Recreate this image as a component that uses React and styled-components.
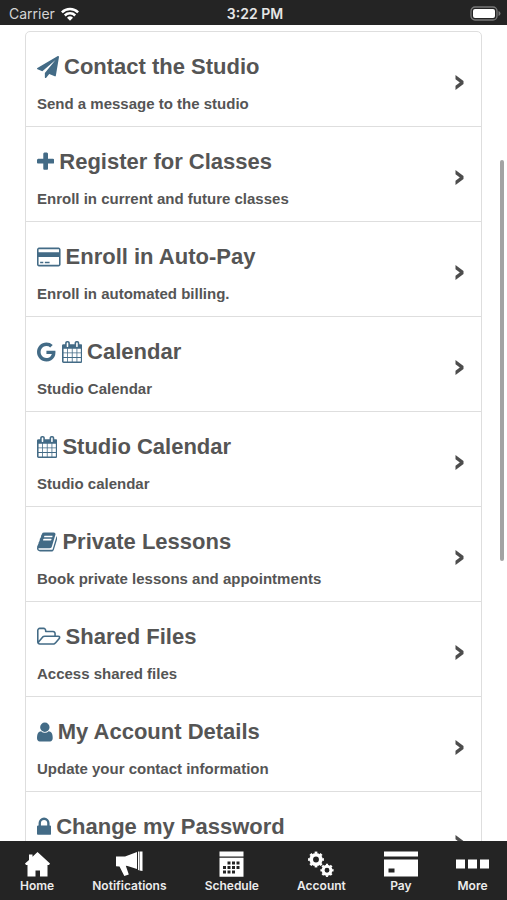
import React from 'react';
import styled, { createGlobalStyle } from 'styled-components';

const GlobalStyle = createGlobalStyle`
  * {
    box-sizing: border-box;
  }

  body {
    margin: 0;
    background-color: #fff;
    font-family: 'Liberation Sans', Arial, sans-serif;
  }
`;

const Screen = styled.div`
  display: flex;
  flex-direction: column;
  height: 100vh;
`;

const StatusBar = styled.header`
  display: grid;
  grid-template-columns: 1fr auto 1fr;
  align-items: center;
  flex: none;
  height: 25px;
  padding: 2px 6px 0 9px;
  background-color: #242424;
  color: #d4d4d4;
  font-family: Inter, sans-serif;
  font-size: 14px;
  line-height: 16px;

  svg {
    display: block;
  }
`;

const Carrier = styled.div`
  display: flex;
  align-items: center;
  gap: 6px;
`;

const Clock = styled.time`
  color: #e6e6e6;
  font-weight: 600;
`;

const Battery = styled.div`
  justify-self: end;
`;

const Content = styled.main`
  position: relative;
  flex: 1;
  min-height: 0;
  overflow: hidden;
  padding: 6px 25px 0;
`;

const ScrollThumb = styled.div`
  position: absolute;
  top: 16.5%;
  right: 3px;
  width: 4px;
  height: 49.2%;
  border-radius: 2px;
  background-color: #a3a3a3;
`;

const Menu = styled.ul`
  margin: 0;
  padding: 0;
  list-style: none;
  border: 1px solid #dedede;
  border-radius: 5px;
`;

const MenuItem = styled.li`
  & + & {
    border-top: 1px solid #dedede;
  }
`;

const MenuLink = styled.a`
  display: flex;
  align-items: center;
  justify-content: space-between;
  padding: 19px 17px 12px 11px;
  color: #555;
  text-decoration: none;
`;

const MenuTitle = styled.h2`
  display: flex;
  align-items: center;
  gap: 5px;
  margin: 0 0 11px;
  font-size: 22px;
  font-weight: bold;
  line-height: 32px;
`;

const MenuText = styled.p`
  min-height: 20px;
  margin: 0;
  font-size: 15px;
  font-weight: bold;
  line-height: 20px;
`;

const MenuIcon = styled.svg`
  height: 22px;
  flex: none;
  fill: #436b86;
`;

const Chevron = styled.svg`
  flex: none;
  fill: #4d4d4d;
`;

const TabBar = styled.nav`
  display: flex;
  justify-content: space-between;
  flex: none;
  height: 59px;
  padding: 10px 18px 0 20px;
  background-color: #242424;
`;

const Tab = styled.a`
  display: flex;
  flex-direction: column;
  align-items: center;
  gap: 1px;
  color: #ececec;
  font-family: Inter, sans-serif;
  font-size: 12px;
  font-weight: 600;
  line-height: 16px;
  text-decoration: none;

  svg {
    display: block;
    height: 26px;
    fill: #fff;
  }
`;

// each icon: view box and path
const icons = {
  plane: {
    box: '0 0 1792 1792',
    path: 'M1764 11q33 24 27 64l-256 1536q-5 29-32 45-14 8-31 8-11 0-24-5l-453-185-242 295q-18 23-49 23-13 0-22-4-19-7-30.5-23.5t-11.5-36.5v-349l864-1059-1069 925-395-162q-37-14-40-55-2-40 32-59l1664-960q15-9 32-9 20 0 36 11z',
  },
  plus: {
    box: '192 0 1408 1792',
    path: 'M1600 736v192q0 40-28 68t-68 28h-416v416q0 40-28 68t-68 28h-192q-40 0-68-28t-28-68v-416h-416q-40 0-68-28t-28-68v-192q0-40 28-68t68-28h416v-416q0-40 28-68t68-28h192q40 0 68 28t28 68v416h416q40 0 68 28t28 68z',
  },
  card: {
    box: '0 0 1920 1792',
    path: 'M1760 128q66 0 113 47t47 113v1216q0 66-47 113t-113 47h-1600q-66 0-113-47t-47-113v-1216q0-66 47-113t113-47h1600zM160 256q-13 0-22.500 9.500t-9.500 22.500v224h1664v-224q0-13-9.500-22.500t-22.500-9.500h-1600zM1760 1536q13 0 22.500-9.500t9.500-22.500v-608h-1664v608q0 13 9.500 22.500t22.500 9.500h1600zM256 1408v-128h256v128h-256zM640 1408v-128h384v128h-384z',
  },
  google: {
    box: '128 0 1600 1792',
    path: 'M896 786h725q12 67 12 128 0 217-91 387.5t-259.5 266.5-386.5 96q-157 0-299-60.5t-245-163.5-163.500-245-60.500-299 60.500-299 163.500-245 245-163.500 299-60.500q300 0 515 201l-209 201q-123-119-306-119-129 0-238.500 65t-173.500 176.500-64 243.500 64 243.500 173.500 176.500 238.500 65q87 0 160-24t120-60 82-82 51.500-87 22.500-78h-436v-264z',
  },
  calendar: {
    box: '64 0 1664 1792',
    path: 'M192 1664h288v-288h-288v288zm352 0h320v-288h-320v288zm-352-352h288v-320h-288v320zm352 0h320v-320h-320v320zm-352-384h288v-288h-288v288zm736 736h320v-288h-320v288zm-384-736h320v-288h-320v288zm768 736h288v-288h-288v288zm-384-352h320v-320h-320v320zm-352-864v-288q0-13-9.500-22.500t-22.500-9.500h-64q-13 0-22.500 9.500t-9.500 22.500v288q0 13 9.500 22.500t22.500 9.500h64q13 0 22.500-9.500t9.500-22.500zm736 864h288v-320h-288v320zm-384-384h320v-288h-320v288zm384 0h288v-288h-288v288zm32-480v-288q0-13-9.500-22.500t-22.500-9.500h-64q-13 0-22.500 9.500t-9.500 22.500v288q0 13 9.500 22.500t22.500 9.500h64q13 0 22.500-9.500t9.500-22.500zm384-64v1280q0 52-38 90t-90 38h-1408q-52 0-90-38t-38-90v-1280q0-52 38-90t90-38h128v-96q0-66 47-113t113-47h64q66 0 113 47t47 113v96h384v-96q0-66 47-113t113-47h64q66 0 113 47t47 113v96h128q52 0 90 38t38 90z',
  },
  book: {
    box: '64 0 1664 1792',
    path: 'M1703 478q40 57 18 129l-275 906q-19 64-76.5 107.5t-122.500 43.500h-923q-77 0-148.500-53.500t-99.500-131.500q-24-67-2-127 0-4 3-27t4-37q1-8-3-21.500t-3-19.500q2-11 8-21t16.500-23.500 16.500-23.500q23-38 45-91.500t30-91.500q3-10 .5-30t-.5-28q3-11 17-28t17-23q21-36 42-92t25-90q1-9-2.500-32t.5-28q4-13 22-30.500t22-22.500q19-26 42.500-84.500t27.500-96.500q1-8-3-25.500t-2-26.500q2-8 9-18t18-23 17-21q8-12 16.500-30.500t15-35 16-36 19.500-32 26.500-23.500 36-11.500 47.500 5.500l-1 3q38-9 51-9h761q74 0 114 56t18 130l-274 906q-36 119-71.500 153.500t-128.500 34.500h-869q-27 0-38 15-11 16-1 43 24 70 144 70h923q29 0 56-15.500t35-41.500l300-987q7-22 5-57 38 15 59 43zm-1064 2q-4 13 2 22.500t20 9.500h608q13 0 25.500-9.500t16.500-22.500l21-64q4-13-2-22.500t-20-9.500h-608q-13 0-25.500 9.500t-16.500 22.500zm-83 256q-4 13 2 22.500t20 9.500h608q13 0 25.500-9.500t16.500-22.500l21-64q4-13-2-22.500t-20-9.500h-608q-13 0-25.500 9.500t-16.500 22.500z',
  },
  folder: {
    box: '0 0 1920 1792',
    path: 'M1781 931q0-35-53-35h-1088q-40 0-85.500 21.500t-71.500 52.500l-294 363q-18 24-18 40 0 35 53 35h1088q40 0 86-22t71-53l294-363q18-22 18-39zm-1141-163h768v-160q0-40-28-68t-68-28h-576q-40 0-68-28t-28-68v-64q0-40-28-68t-68-28h-320q-40 0-68 28t-28 68v853l256-315q44-53 116-87.500t140-34.500zm1269 163q0 62-46 120l-295 363q-43 53-116 87.500t-140 34.500h-1088q-92 0-158-66t-66-158v-960q0-92 66-158t158-66h320q92 0 158 66t66 158v32h544q92 0 158 66t66 158v160h192q54 0 99 24.500t67 70.500q15 32 15 68z',
  },
  user: {
    box: '256 0 1280 1792',
    path: 'M1536 1399q0 109-62.500 187t-150.500 78h-854q-88 0-150.500-78t-62.500-187q0-85 8.500-160.500t31.500-152 58.500-131 94-89 134.500-34.500q131 128 313 128t313-128q76 0 134.500 34.500t94 89 58.500 131 31.500 152 8.500 160.500zm-256-887q0 159-112.500 271.500t-271.500 112.500-271.500-112.500-112.500-271.500 112.500-271.500 271.500-112.500 271.500 112.500 112.500 271.500z',
  },
  lock: {
    box: '320 0 1152 1792',
    path: 'M640 768h512v-192q0-106-75-181t-181-75-181 75-75 181v192zm832 96v576q0 40-28 68t-68 28h-960q-40 0-68-28t-28-68v-576q0-40 28-68t68-28h32v-192q0-184 132-316t316-132 316 132 132 316v192h32q40 0 68 28t28 68z',
  },
};

const menuItems = [
  { icons: ['plane'], title: 'Contact the Studio', text: 'Send a message to the studio' },
  { icons: ['plus'], title: 'Register for Classes', text: 'Enroll in current and future classes' },
  { icons: ['card'], title: 'Enroll in Auto-Pay', text: 'Enroll in automated billing.' },
  { icons: ['google', 'calendar'], title: 'Calendar', text: 'Studio Calendar' },
  { icons: ['calendar'], title: 'Studio Calendar', text: 'Studio calendar' },
  { icons: ['book'], title: 'Private Lessons', text: 'Book private lessons and appointments' },
  { icons: ['folder'], title: 'Shared Files', text: 'Access shared files' },
  { icons: ['user'], title: 'My Account Details', text: 'Update your contact information' },
  { icons: ['lock'], title: 'Change my Password' },
];

function HomeIcon() {
  return (
    <svg width="25" viewBox="0 0 25 26" aria-hidden="true">
      <path d="M12.500 1 25 12.500l-1 1.500h-1.500v11.500h-7.500v-6h-4.500v6H2.500V14H1L0 12.500 4 9V3.500h3.500v2.200z" />
    </svg>
  );
}

function MegaphoneIcon() {
  return (
    <svg width="27" viewBox="0 0 27 26" aria-hidden="true">
      <path d="M0 5.500h9L21 1v17l-9.500-3-1.700-.2 3 8.700-4.500 1.500-4.800-9.500-3.500-.3zM22 .5h1v18.700l-1-.3zM23.500.5h3v19.500l-3-.6z" />
    </svg>
  );
}

function ScheduleIcon() {
  const dots = [
    [8.500, 10.500], [13, 10.500], [17.500, 10.500],
    [4, 15], [8.500, 15], [13, 15], [17.500, 15],
    [4, 19.500], [8.500, 19.500], [13, 19.500],
  ];
  return (
    <svg width="25" viewBox="0 0 25 26" aria-hidden="true">
      <path d="M.5.5h24v5H.5zM.5 6.700h24v19H.5z" />
      {dots.map(([x, y]) => (
        <rect key={`${x}-${y}`} x={x} y={y} width="3" height="3" fill="#242424" />
      ))}
    </svg>
  );
}

function Gear({ x, y, r }) {
  return (
    <g fill="none" stroke="#fff">
      <circle cx={x} cy={y} r={r * 0.62} strokeWidth={r * 0.48} />
      <circle
        cx={x}
        cy={y}
        r={r * 0.9}
        strokeWidth={r * 0.26}
        pathLength="16"
        strokeDasharray="1 1"
        strokeDashoffset="0.5"
      />
    </g>
  );
}

function GearsIcon() {
  return (
    <svg width="26" viewBox="0 0 26 26" aria-hidden="true">
      <Gear x={8} y={8.500} r={7.700} />
      <Gear x={19} y={19.300} r={6.400} />
    </svg>
  );
}

function PayIcon() {
  return (
    <svg width="34" viewBox="0 0 34 26" aria-hidden="true">
      <path d="M0 .5h34v5H0zM0 8.500h34v17H0z" />
      <rect x="4.500" y="17.500" width="6" height="4" fill="#242424" />
    </svg>
  );
}

function MoreIcon() {
  return (
    <svg width="33" viewBox="0 0 33 26" aria-hidden="true">
      <path d="M0 8.500h9v9H0zM12 8.500h9v9h-9zM24 8.500h9v9h-9z" />
    </svg>
  );
}

const tabs = [
  { label: 'Home', Icon: HomeIcon },
  { label: 'Notifications', Icon: MegaphoneIcon },
  { label: 'Schedule', Icon: ScheduleIcon },
  { label: 'Account', Icon: GearsIcon },
  { label: 'Pay', Icon: PayIcon },
  { label: 'More', Icon: MoreIcon },
];

function App() {
  return (
    <Screen>
      <GlobalStyle />
      <StatusBar>
        <Carrier>
          Carrier
          <svg width="18" height="14" viewBox="0 0 18 14" aria-hidden="true">
            <g fill="none" stroke="#fff" strokeWidth="2.500">
              <path d="M.9 5.300a11.500 11.500 0 0 1 16.200 0" />
              <path d="M3.800 8.500a7.400 7.400 0 0 1 10.400 0" />
            </g>
            <path fill="#fff" d="M9 13.700 6 10.700a4.300 4.300 0 0 1 6 0z" />
          </svg>
        </Carrier>
        <Clock>3:22 PM</Clock>
        <Battery>
          <svg width="31" height="15" viewBox="0 0 31 15" aria-hidden="true">
            <rect x="1" y="1" width="26" height="13" rx="4" fill="none" stroke="#777" strokeWidth="1.300" />
            <rect x="3" y="3" width="22" height="9" rx="2" fill="#fff" />
            <path d="M28.500 5v5q2-.8 2-2.500t-2-2.500z" fill="#777" />
          </svg>
        </Battery>
      </StatusBar>
      <Content>
        <Menu>
          {menuItems.map((item) => (
            <MenuItem key={item.title}>
              <MenuLink href="#">
                <div>
                  <MenuTitle>
                    {item.icons.map((name) => (
                      <MenuIcon key={name} viewBox={icons[name].box} aria-hidden="true">
                        <path d={icons[name].path} />
                      </MenuIcon>
                    ))}
                    {item.title}
                  </MenuTitle>
                  <MenuText>{item.text}</MenuText>
                </div>
                <Chevron width="9" height="15" viewBox="0 0 9 15" aria-hidden="true">
                  <path d="M.5 0 8.500 6v3L.5 15v-4.200L4.800 7.500.5 4.200z" />
                </Chevron>
              </MenuLink>
            </MenuItem>
          ))}
        </Menu>
        <ScrollThumb />
      </Content>
      <TabBar>
        {tabs.map(({ label, Icon }) => (
          <Tab key={label} href="#">
            <Icon />
            {label}
          </Tab>
        ))}
      </TabBar>
    </Screen>
  );
}

export default App;
